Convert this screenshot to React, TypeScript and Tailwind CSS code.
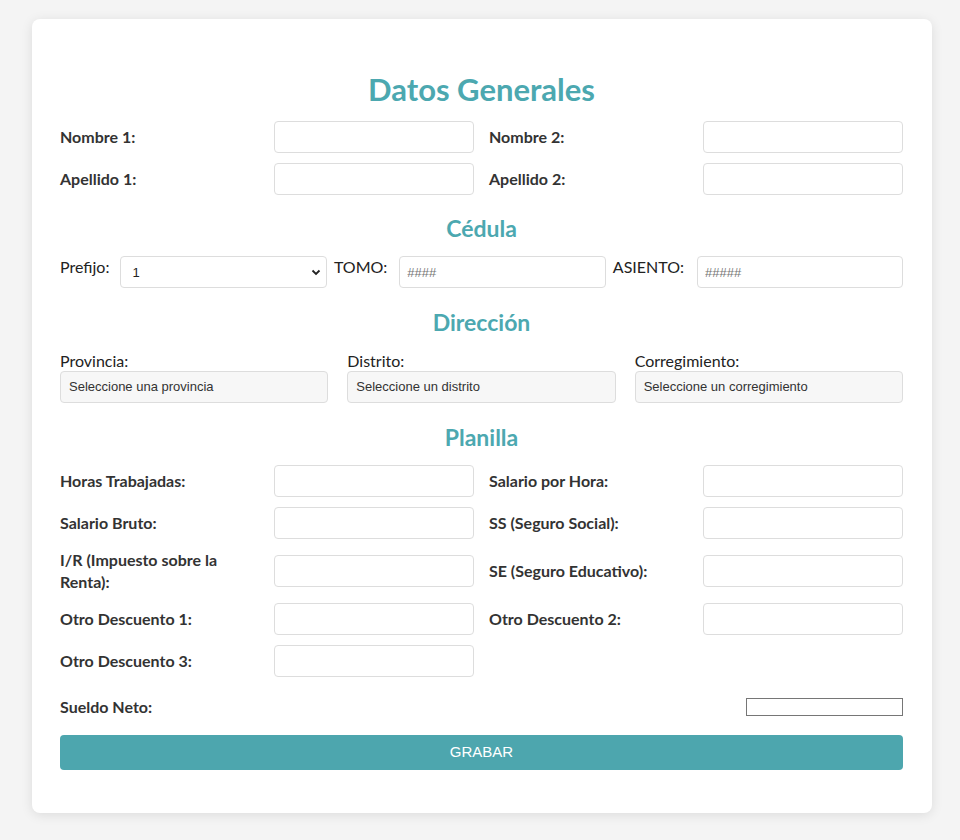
import type { ReactNode } from "react";

const LABEL_FONT = "font-['Lato','Open_Sans',sans-serif]";
const FIELD_FONT = "font-['Liberation_Sans',Arial,sans-serif]";

const inputBox = `h-[32px] w-[200px] rounded-[4px] border border-[#dddddd] bg-white px-[7px] text-[13px] text-[#333] outline-none ${FIELD_FONT}`;

function BoldField({ label, id }: { label: string; id: string }) {
  return (
    <div className="flex items-center justify-between">
      <label htmlFor={id} className="w-[196px] text-[16px] font-bold leading-[22px] text-[#333]">
        {label}
      </label>
      <input id={id} type="text" className={inputBox} />
    </div>
  );
}

function SectionTitle({ children, className }: { children: ReactNode; className: string }) {
  return (
    <h2 className={`text-center text-[23px] font-bold leading-[27px] text-[#4ca8b0] ${className}`}>{children}</h2>
  );
}

const DIRECCION = [
  { label: "Provincia:", option: "Seleccione una provincia" },
  { label: "Distrito:", option: "Seleccione un distrito" },
  { label: "Corregimiento:", option: "Seleccione un corregimiento" },
];

export default function App() {
  return (
    <div className={`min-h-screen bg-[#f4f4f4] px-[32px] pt-[19px] pb-[27px] ${LABEL_FONT}`}>
      <form
        className="w-[900px] rounded-[8px] bg-white pl-[28px] pr-[29px] pt-[52px] pb-[43px] shadow-[0_2px_12px_rgba(0,0,0,0.1)]"
        onSubmit={(e) => e.preventDefault()}
      >
        <h1 className="mb-[14px] text-center text-[31px] font-bold leading-[36px] text-[#4ca8b0]">Datos Generales</h1>

        <div className="grid grid-cols-2 gap-x-[15px] gap-y-[10px]">
          <BoldField label="Nombre 1:" id="nombre1" />
          <BoldField label="Nombre 2:" id="nombre2" />
          <BoldField label="Apellido 1:" id="apellido1" />
          <BoldField label="Apellido 2:" id="apellido2" />
        </div>

        <SectionTitle className="mt-[20px] mb-[14px]">Cédula</SectionTitle>

        <div className="flex items-start justify-between text-[16px] leading-[22px] text-[#222]">
          <div className="flex items-start gap-[11px]">
            <label htmlFor="prefijo">Prefijo:</label>
            <div className="relative">
              <select
                id="prefijo"
                className={`h-[32px] w-[207px] appearance-none rounded-[4px] border border-[#dddddd] bg-white pl-[11px] pt-[2px] text-[13px] text-[#222] outline-none ${FIELD_FONT}`}
              >
                <option>1</option>
                <option>2</option>
                <option>3</option>
              </select>
              <svg
                className="pointer-events-none absolute right-[6px] top-[13px]"
                width="10"
                height="7"
                viewBox="0 0 10 7"
                fill="none"
              >
                <path d="M1.5 1.5 5 5l3.5-3.5" stroke="#222" strokeWidth="1.8" />
              </svg>
            </div>
          </div>
          <div className="flex items-start gap-[12px]">
            <label htmlFor="tomo">TOMO:</label>
            <input id="tomo" placeholder="####" className={`${inputBox} w-[207px] placeholder:text-[#757575]`} />
          </div>
          <div className="flex items-start gap-[13px]">
            <label htmlFor="asiento">ASIENTO:</label>
            <input id="asiento" placeholder="#####" className={`${inputBox} w-[206px] placeholder:text-[#757575]`} />
          </div>
        </div>

        <SectionTitle className="mt-[21px] mb-[15px]">Dirección</SectionTitle>

        <div className="grid grid-cols-3 gap-x-[19px]">
          {DIRECCION.map((d) => (
            <div key={d.label} className="flex flex-col">
              <label className="text-[16px] leading-[20px] text-[#222]">{d.label}</label>
              <select
                disabled
                className={`h-[32px] w-full appearance-none rounded-[4px] border border-[#dddddd] bg-[#f7f7f7] px-[8px] text-[13px] text-[#333] opacity-100 outline-none ${FIELD_FONT}`}
              >
                <option>{d.option}</option>
              </select>
            </div>
          ))}
        </div>

        <SectionTitle className="mt-[21px] mb-[14px]">Planilla</SectionTitle>

        <div className="grid grid-cols-2 gap-x-[15px] gap-y-[10px]">
          <BoldField label="Horas Trabajadas:" id="horas" />
          <BoldField label="Salario por Hora:" id="salarioHora" />
          <BoldField label="Salario Bruto:" id="bruto" />
          <BoldField label="SS (Seguro Social):" id="ss" />
          <BoldField label="I/R (Impuesto sobre la Renta):" id="ir" />
          <BoldField label="SE (Seguro Educativo):" id="se" />
          <BoldField label="Otro Descuento 1:" id="desc1" />
          <BoldField label="Otro Descuento 2:" id="desc2" />
          <BoldField label="Otro Descuento 3:" id="desc3" />
        </div>

        <div className="mt-[19px] flex items-center justify-between">
          <label htmlFor="neto" className="text-[16px] font-bold leading-[21px] text-[#333]">
            Sueldo Neto:
          </label>
          <input id="neto" readOnly className="h-[18px] w-[157px] border border-[#767676] bg-white" />
        </div>

        <button
          type="submit"
          className={`mt-[18px] h-[35px] w-full rounded-[4px] bg-[#4da6ae] text-[15px] text-white ${FIELD_FONT}`}
        >
          GRABAR
        </button>
      </form>
    </div>
  );
}
